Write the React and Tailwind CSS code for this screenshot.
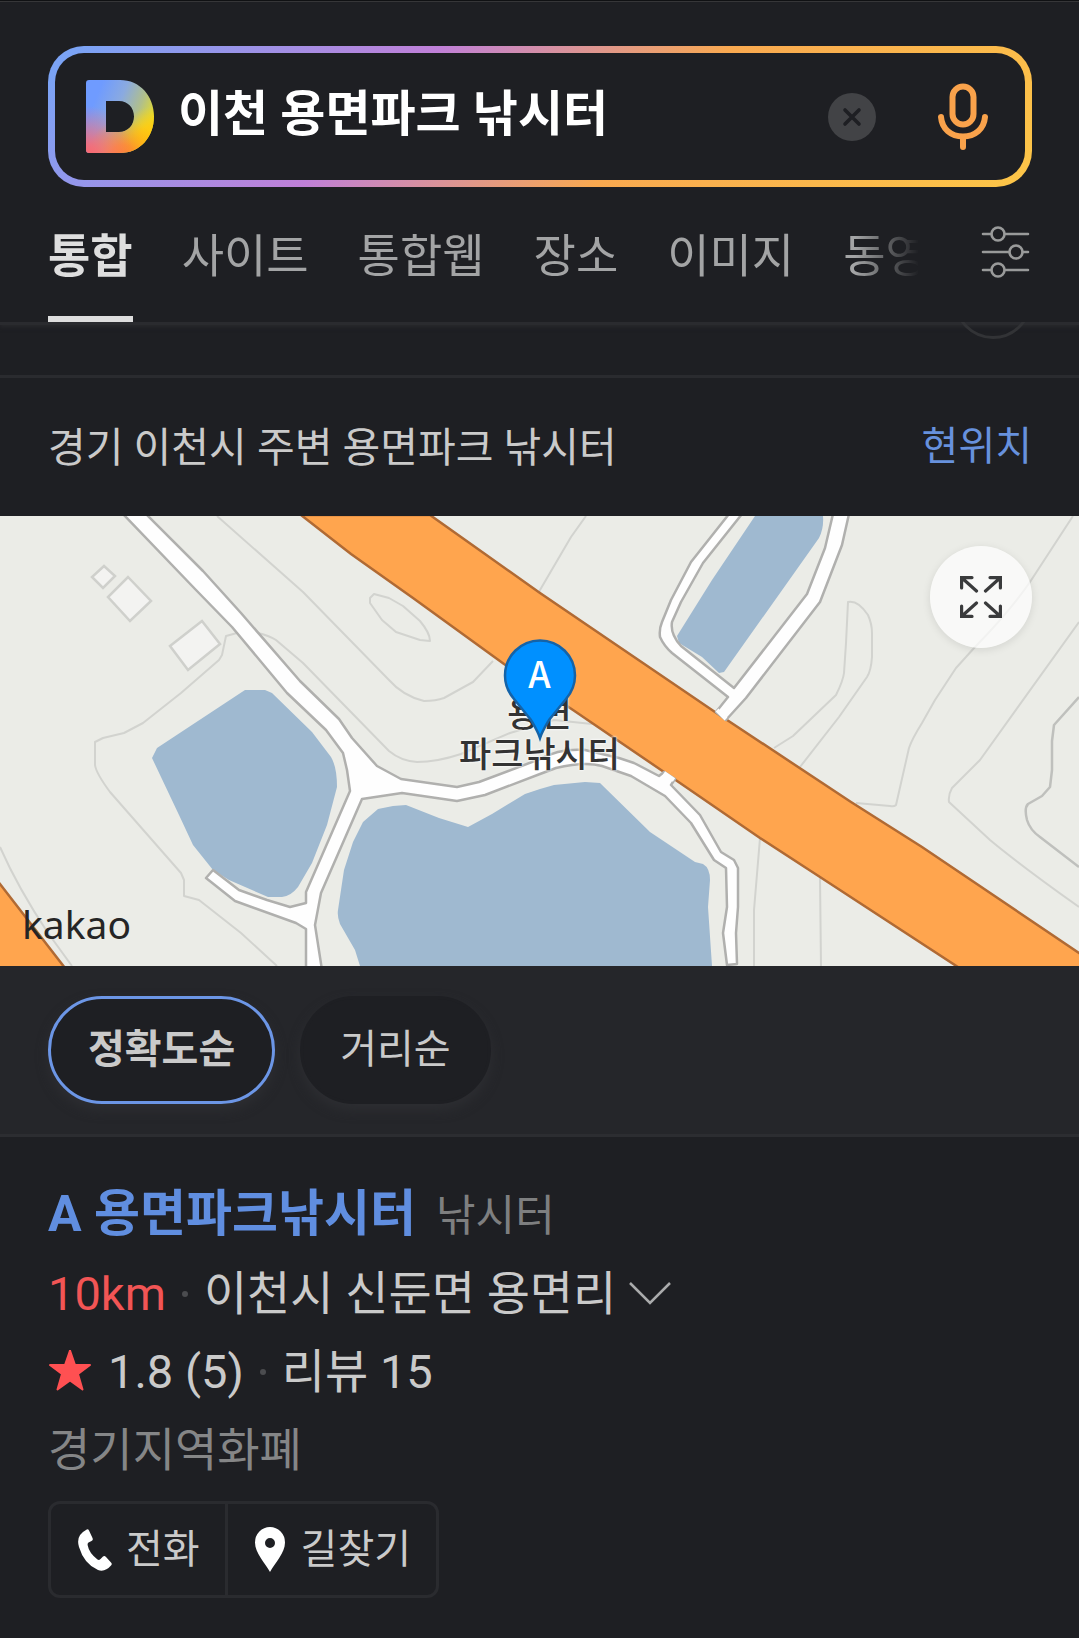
import { useState } from 'react';

const TABS = ['통합', '사이트', '통합웹', '장소', '이미지', '동영상'];

const SORTS = [
  { id: 'accuracy', label: '정확도순' },
  { id: 'distance', label: '거리순' },
];

const DaumLogo = () => (
  <svg className="w-[68px] h-[73px] shrink-0" viewBox="0 0 68 73" role="img" aria-label="Daum">
    <defs>
      <linearGradient id="logo-base" x1="0.1" y1="0.1" x2="1" y2="0.5">
        <stop offset="0.1" stopColor="#6f9bff" />
        <stop offset="0.45" stopColor="#8aaae0" />
        <stop offset="0.75" stopColor="#b0bf8c" />
        <stop offset="1" stopColor="#e6dc28" />
      </linearGradient>
      <radialGradient id="logo-coral" cx="0" cy="1.05" r="0.7">
        <stop offset="0" stopColor="#ff6468" />
        <stop offset="0.25" stopColor="#ff6870" stopOpacity="0.85" />
        <stop offset="1" stopColor="#ff6f80" stopOpacity="0" />
      </radialGradient>
      <radialGradient id="logo-orange" cx="0.55" cy="1.08" r="0.55">
        <stop offset="0" stopColor="#ff8226" />
        <stop offset="0.35" stopColor="#ff8e28" stopOpacity="0.9" />
        <stop offset="1" stopColor="#ffb010" stopOpacity="0" />
      </radialGradient>
      <radialGradient id="logo-yellow" cx="0.95" cy="0.82" r="0.45">
        <stop offset="0" stopColor="#ffc30f" />
        <stop offset="0.4" stopColor="#ffcb12" stopOpacity="0.9" />
        <stop offset="1" stopColor="#ffd414" stopOpacity="0" />
      </radialGradient>
      <clipPath id="logo-shape">
        <path clipRule="evenodd" d="M3 0H34C54 0 68 16 68 36.500S54 73 34 73H3Q0 73 0 70V3Q0 0 3 0ZM20 21V52H33C42 52 48 45 48 36.500S42 21 33 21Z" />
      </clipPath>
    </defs>
    <g clipPath="url(#logo-shape)">
      <rect width="68" height="73" fill="url(#logo-base)" />
      <rect width="68" height="73" fill="url(#logo-yellow)" />
      <rect width="68" height="73" fill="url(#logo-orange)" />
      <rect width="68" height="73" fill="url(#logo-coral)" />
    </g>
  </svg>
);

const MicIcon = () => (
  <svg className="w-[50px] h-[68px]" viewBox="0 0 50 68" fill="none" stroke="#f9a24b" strokeWidth="6" strokeLinecap="round">
    <rect x="14.500" y="3.500" width="21" height="38" rx="10.500" />
    <path d="M3 34C4 46 13 53.500 25 53.500S46 46 47 34M25 54V64" />
  </svg>
);

const FilterIcon = () => (
  <svg className="w-[50px] h-[54px]" viewBox="0 0 50 54" fill="none" stroke="#999a9a" strokeWidth="2.600" strokeLinecap="round">
    <path d="M2 9H10M24 9H47M2 27H28M42 27H47M2 45H10M24 45H47" />
    <circle cx="17" cy="9" r="6.500" />
    <circle cx="35" cy="27" r="6.500" />
    <circle cx="17" cy="45" r="6.500" />
  </svg>
);

const ExpandIcon = () => (
  <svg className="w-[42px] h-[42px]" viewBox="0 0 42 42" fill="none" stroke="#3a3b3c" strokeWidth="3.200" strokeLinecap="round">
    <path d="M12 1.600H1.600V12M2 2L16.500 15" />
    <path d="M30 1.600H40.400V12M40 2L25.500 15" />
    <path d="M12 40.400H1.600V30M2 40L16.500 27" />
    <path d="M30 40.400H40.400V30M40 40L25.500 27" />
  </svg>
);

const MapDrawing = () => (
  <svg className="absolute inset-0 w-full h-full" viewBox="0 0 1079 450" preserveAspectRatio="xMidYMid slice" aria-hidden="true">
    <rect width="1079" height="450" fill="#ebece7" />

    {/* contour lines */}
    <g fill="none" stroke="#d2d3cf" strokeWidth="2" strokeLinejoin="round">
      <path d="M217 0L303 76L389 164Q403 180 424 185Q436 185 444 182L473 166L493 145" />
      <path d="M258 117Q270 120 276 124L303 147L389 235Q401 245 417 246Q437 246 461 238L510 217L554 204L592 208" />
      <path d="M237 117L226 120L222 139L219 144L181 177L143 207L124 217L103 222L95 226L95 249Q96 257 110 276L181 357L184 364L184 380L199 384L241 417L277 450" />
      <path d="M0 331Q18 372 48 417L72 450" />
      <path d="M374 78L389 82L403 90L420 105Q430 117 430 125L420 124L396 116L382 104L370 87L370 82Z" />
      <path d="M586 0L571 21L540 74L534 90" />
      <path d="M774 232L793 220L836 179Q843 165 844 157L846 127L848 86Q858 84 868 99Q872 108 872 117V141Q871 155 867 161L839 201L800 251" />
      <path d="M1073 0L1030 66Q1010 95 975 131L956 152L935 184L922 207Q912 223 909 232L896 289Q894 291 890 290L856 287" />
      <path d="M1079 106L980 244L952 272Q948 279 949 286L990 324Q1020 349 1079 391" />
      <path d="M760 322L754 394V450M820 361L821 450" />
      <path stroke="#bfc0bd" strokeWidth="2.500" d="M1079 181L1054 209L1052 225V254L1050 271L1042 280L1028 288Q1024 292 1027 304Q1030 314 1040 321L1079 351" />
    </g>

    {/* buildings */}
    <g fill="#f3f3f1" stroke="#cfd0cc" strokeWidth="2.500">
      <path d="M104 50L115 60L103 72L92 61Z" />
      <path d="M128 61L151 85L130 105L108 81Z" />
      <path d="M202 105L220 128L188 154L170 130Z" />
    </g>

    {/* water */}
    <g fill="#9fb9d0">
      <path d="M245 174H265L272 177L312 216L331 241Q337 251 337 271L327 309L312 347L298 371Q291 380 282 381H268L229 364L213 354L193 329L179 299L152 242L157 232Z" />
      <path d="M378 293L393 290L406 289L439 302L468 311L492 298L525 278L540 273L554 269L585 266L600 267L650 316L695 346L703 348Q710 352 710 364L708 391L712 450H360L355 434L340 408Q337 400 338 394L344 354L353 326L363 306Z" />
      <path d="M755 0L712 64L677 120L679 127L702 141L719 157L724 156L819 22Q824 12 823 0Z" />
    </g>

    {/* highway */}
    <g fill="#ffa54e" stroke="#b06a34" strokeWidth="2.500">
      <path d="M430 -1L540 77L715 196L851 286L922 331L1082 439V455H964L820 361L760 322L664 256L573 194L504 148L413 82L351 38L301 -1Z" />
      <path d="M-4 363L0 368L65 452H-4Z" />
    </g>

    {/* local roads */}
    <g fill="#fefefe" stroke="#b0b0ae" strokeWidth="2.500" strokeLinejoin="round">
      <path d="M123 -2L196 74L232 111L287 177L326 214L343 237L347 254L350 275L306 376V387L290 391L267 384L239 374L213 354L206 362L235 385L296 407L306 413V454H322L315 409L321 377L362 283L402 277L457 285L485 279L540 258L556 252Q585 245 602 250L631 260L665 280L691 307L714 344L726 352L727 391L723 417L727 449L737 448L736 417L738 391V352L734 344L721 336L700 299L671 269L675 263L664 256L659 260L634 247L619 242L585 234Q560 232 540 243L479 266L457 271L401 263L377 250L352 222L339 203L300 165L241 97L203 55L146 -2Z" />
      <path d="M729 -2L691 46L671 84L662 106Q659 113 660 121Q664 130 672 137L728 181L716 196L726 204L746 182L820 86L842 29L849 -2H833L825 32L807 78L734 172L681 130Q670 118 672 106L681 86L703 47L742 -2Z" />
    </g>

    {/* junctions that open onto the highway */}
    <path d="M717 194L726 203M664 257L674 264" stroke="#fefefe" strokeWidth="4" />
  </svg>
);

const MapPin = () => (
  <svg className="w-[74px] h-[104px]" viewBox="0 0 74 104" aria-hidden="true">
    <path d="M37 100C35 94 32 89 28 82L11 61C5 54 2 46 2 37.500A35 35 0 0 1 72 37.500C72 46 69 54 63 61L46 82C42 89 39 94 37 100Z" fill="#0090ff" stroke="#1463a8" strokeWidth="2.500" />
  </svg>
);

const Dot = () => <span className="w-[6px] h-[6px] rounded-full bg-[#4b4c4f] shrink-0" />;

const SearchHeader = () => {
  const [query, setQuery] = useState('이천 용면파크 낚시터');
  const [tab, setTab] = useState('통합');

  return (
    <header className="border-b-[3px] border-[#2a2b2f] shadow-[0_2px_4px_#28292c]">
      <div className="pl-12 pr-[47px] pt-11">
        <form
          onSubmit={e => e.preventDefault()}
          className="rounded-[36px] p-[7px] bg-[linear-gradient(135deg,#7ba3f5_3%,#c080d8_35%,#f9a950_61%,#fdc648_100%)]"
        >
          <div className="flex items-center h-[127px] rounded-[29px] bg-[#1e1f23] pl-[31px] pr-[37px]">
            <DaumLogo />
            <input
              type="text"
              aria-label="검색어"
              value={query}
              onChange={e => setQuery(e.target.value)}
              className="flex-1 min-w-0 ml-6 pb-1 bg-transparent text-[49px] leading-[72px] font-bold text-white outline-none"
            />
            <button type="button" aria-label="지우기" onClick={() => setQuery('')} className="flex items-center justify-center size-12 rounded-full bg-[#424346]">
              <svg className="size-5" viewBox="0 0 20 20" stroke="#1e1f23" strokeWidth="3.600" strokeLinecap="round">
                <path d="M3 3L17 17M17 3L3 17" />
              </svg>
            </button>
            <button type="button" aria-label="음성 검색" className="ml-[62px]">
              <MicIcon />
            </button>
          </div>
        </form>
      </div>

      <div className="flex items-center h-[135px] px-12">
        <nav className="flex flex-1 min-w-0 h-full gap-[49px] overflow-hidden [mask-image:linear-gradient(to_right,#000_calc(100%-64px),transparent)]">
          {TABS.map(name => (
            <a
              key={name}
              href="#"
              onClick={() => setTab(name)}
              className={
                name === tab
                  ? 'flex items-center shrink-0 h-full pt-2.5 border-b-[6px] border-[#dedede] text-[46px] font-bold text-[#dedede]'
                  : 'flex items-center shrink-0 h-full pt-2.5 border-b-[6px] border-transparent text-[46px] text-[#a3a4a5]'
              }
            >
              {name}
            </a>
          ))}
        </nav>
        <button type="button" aria-label="검색 옵션" className="ml-[62px] pb-1.5 shrink-0">
          <FilterIcon />
        </button>
      </div>
    </header>
  );
};

const App = () => {
  const [sort, setSort] = useState('accuracy');

  return (
    <div className="min-h-screen overflow-hidden border-t border-[#101113] bg-[#1e1f23] text-[#cacaca] font-[Roboto,'Noto_Sans_CJK_KR',sans-serif]">
      <div className="border-t border-[#39393a]">
        <SearchHeader />
      </div>

      {/* tail of the previous card */}
      <div className="flex justify-end h-[53px] -mt-[3px] pl-12 pr-[47px] overflow-hidden">
        <button type="button" aria-label="더보기" className="-mt-[61px] size-[78px] rounded-full border-[3px] border-[#323336]" />
      </div>

      <section>
        <div className="flex items-center justify-between h-[141px] pl-12 pr-[47px] border-t-[3px] border-[#2a2b2f]">
          <h2 className="pt-1 text-[41px]">경기 이천시 주변 용면파크 낚시터</h2>
          <a href="#" className="text-[40px] text-[#6791dd]">현위치</a>
        </div>

        {/* Map */}
        <div className="relative h-[450px] overflow-hidden">
          <MapDrawing />
          <p className="absolute top-[180px] left-1/2 -translate-x-1/2 text-center text-[35px] leading-[40px] font-medium text-[#333] [text-shadow:0_0_2px_#fff,0_0_3px_#fff]">
            용면<br />파크낚시터
          </p>
          <div className="absolute top-[122px] left-1/2 -translate-x-1/2">
            <MapPin />
            <span className="absolute inset-x-0 top-3 text-center text-[36px] leading-[44px] font-medium text-white font-['Noto_Sans_CJK_KR',sans-serif]">A</span>
          </div>
          <button type="button" aria-label="지도 확대" className="absolute top-[30px] right-[47px] flex items-center justify-center size-[102px] rounded-full bg-white/70 shadow-[0_2px_8px_rgba(0,0,0,0.1)]">
            <ExpandIcon />
          </button>
          <span className="absolute left-[22px] bottom-[18px] text-[39px] leading-[48px] text-[#252525] font-['Noto_Sans',sans-serif]">kakao</span>
        </div>

        {/* Sort */}
        <div className="flex gap-[25px] px-12 py-[30px] bg-[#25262a] border-b-[3px] border-[#2c2d31]">
          {SORTS.map(({ id, label }) => (
            <button
              key={id}
              type="button"
              onClick={() => setSort(id)}
              className={
                id === sort
                  ? 'h-[108px] px-[37px] rounded-full border-[3px] border-[#6c96e6] bg-[#1e1f23] text-[40px] font-bold shadow-[0_6px_12px_#2d2e32]'
                  : 'h-[108px] px-[37px] rounded-full border-[3px] border-[#1e1f23] bg-[#1e1f23] text-[40px] shadow-[0_6px_12px_#2d2e32]'
              }
            >
              {label}
            </button>
          ))}
        </div>

        {/* Place */}
        <article className="px-12 pt-[39px] pb-10 text-[47px] leading-[78px]">
          <div className="flex items-baseline gap-5 leading-[77px]">
            <h3 className="text-[50px] font-bold text-[#608ee0]"><a href="#">A 용면파크낚시터</a></h3>
            <span className="text-[43px] text-[#7e7f80]">낚시터</span>
          </div>
          <div className="flex items-center gap-4">
            <span className="text-[#f25555]">10km</span>
            <Dot />
            <button type="button" className="flex items-center gap-3">
              이천시 신둔면 용면리
              <svg className="w-11 h-6" viewBox="0 0 44 24" fill="none" stroke="#aaabac" strokeWidth="2.500">
                <path d="M2 1L22 21L42 1" />
              </svg>
            </button>
          </div>
          <div className="flex items-center gap-4">
            <svg className="w-11 h-11" viewBox="0 0 44 44" fill="#ff5052" stroke="#ff5052" strokeWidth="2" strokeLinejoin="round" aria-hidden="true">
              <path d="M22 0.500L27 15H42L30 24L34.500 39.500L22 30.500L9.500 39.500L14 24L2 15H17Z" />
            </svg>
            <span>1.8 (5)</span>
            <Dot />
            <a href="#">리뷰 15</a>
          </div>
          <p className="text-[46px] text-[#858687]">경기지역화폐</p>

          <div className="inline-flex mt-3 rounded-xl border-[3px] border-[#2a2b2f] text-[40px] leading-[91px]">
            <a href="#" className="flex items-center gap-3.5 pl-[27px] pr-[25px]">
              <svg className="w-[34px] h-[42px]" viewBox="0 0 34 42" fill="#fff" aria-hidden="true">
                <path d="M8 1Q10 -0.500 11 1.500L14.500 9Q15.500 11 13.500 12L10.500 13.500Q9.500 14 9.600 16Q11 24 19.500 30.500Q21 31.500 22.500 30L25 27.500Q26.500 26.500 28 28L33 33.500Q34.500 35 33 36.500Q27 43.500 20 41Q6 35 1 18Q-2.500 6.500 8 1Z" />
              </svg>
              전화
            </a>
            <a href="#" className="flex items-center gap-4 pl-[27px] pr-[25px] border-l-[3px] border-[#2a2b2f]">
              <svg className="w-[30px] h-[45px]" viewBox="0 0 30 45" fill="#fff" aria-hidden="true">
                <path fillRule="evenodd" d="M15 45C10 36 0 26 0 15.500A15 15.500 0 0 1 30 15.500C30 26 20 36 15 45ZM15 11A5 5 0 1 0 15 21A5 5 0 1 0 15 11Z" />
              </svg>
              길찾기
            </a>
          </div>
        </article>
      </section>
    </div>
  );
};

export default App;
